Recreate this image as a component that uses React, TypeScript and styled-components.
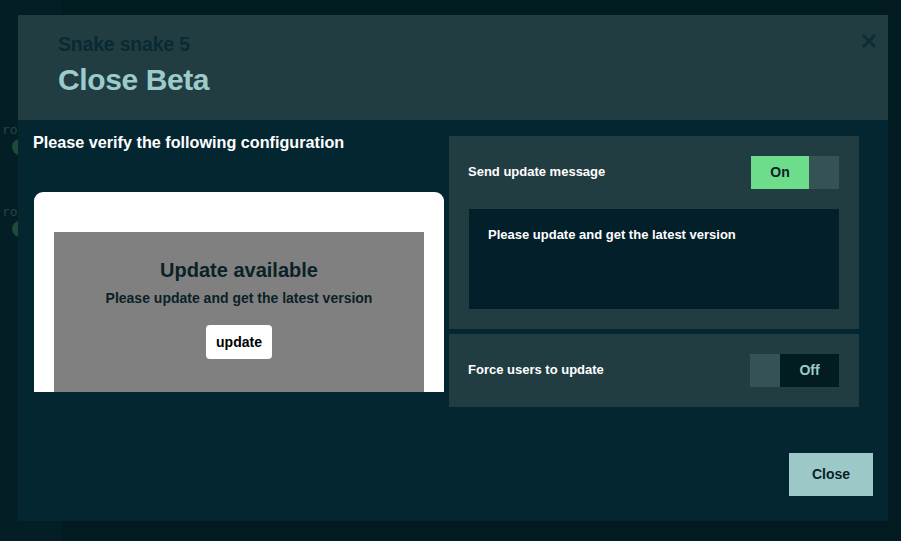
import React from "react";
import styled, { createGlobalStyle } from "styled-components";

const Global = createGlobalStyle`
  html, body { margin: 0; padding: 0; }
  body {
    background: #021a20;
    font-family: "Liberation Sans", Arial, sans-serif;
    width: 901px; height: 541px; overflow: hidden;
  }
`;

const Backdrop = styled.div`
  position: relative;
  width: 901px;
  height: 541px;
  background: #021b21;
  display: flex;
`;

const SideCol = styled.div`
  width: 62px;
  display: flex;
  flex-direction: column;
  padding-top: 122px;
  gap: 46px;
  background: #031e24;
`;

const GhostRow = styled.div`
  height: 36px;
  display: flex;
  flex-direction: column;
  gap: 2px;
  color: #2a4348;
  font-family: "DejaVu Sans Mono", monospace;
  font-size: 13px;
  padding-left: 2px;
`;

const GhostDot = styled.span`
  width: 16px;
  height: 16px;
  border-radius: 50%;
  background: #1d4a3a;
  margin-left: 10px;
`;

const Overlay = styled.div`
  position: absolute;
  inset: 0;
  padding: 15px 13px 20px 18px;
  display: flex;
  align-items: flex-start;
`;

const Modal = styled.div`
  width: 870px;
  height: 506px;
  background: #042631;
  display: flex;
  flex-direction: column;
`;

const Header = styled.div`
  position: relative;
  height: 105px;
  background: #223d42;
  padding: 19px 40px 0 40px;
  box-sizing: border-box;
`;

const Sub = styled.div`
  font-size: 19.5px;
  font-weight: 700;
  color: #0a2a33;
  line-height: 20px;
  letter-spacing: -0.2px;
`;

const Title = styled.h1`
  margin: 9px 0 0;
  font-size: 30px;
  font-weight: 700;
  color: #9ccbcb;
  line-height: 34px;
  letter-spacing: -0.4px;
`;

const CloseX = styled.button`
  position: absolute;
  top: 17px;
  right: 10px;
  width: 18px;
  height: 18px;
  padding: 0;
  border: 0;
  background: transparent;
  display: flex;
  align-items: center;
  justify-content: center;
`;

const Body = styled.div`
  display: grid;
  grid-template-columns: 410px 410px;
  column-gap: 5px;
  padding: 16px 29px 0 16px;
`;

const LeftCol = styled.div`
  display: flex;
  flex-direction: column;
`;

const Heading = styled.div`
  margin-top: -4px;
  font-size: 16.2px;
  font-weight: 700;
  color: #ffffff;
  line-height: 20px;
  margin-left: -1px;
`;

const PreviewCard = styled.div`
  margin-top: 40px;
  height: 200px;
  background: #ffffff;
  border-radius: 9px 9px 0 0;
  padding: 40px 20px 0;
  box-sizing: border-box;
  overflow: hidden;
`;

const Dialog = styled.div`
  height: 200px;
  background: #808080;
  display: flex;
  flex-direction: column;
  align-items: center;
  padding-top: 26px;
  box-sizing: border-box;
  color: #0b2128;
`;

const DialogTitle = styled.div`
  font-size: 20px;
  font-weight: 700;
  line-height: 24px;
`;

const DialogText = styled.div`
  margin-top: 7px;
  font-size: 14px;
  font-weight: 700;
  line-height: 18px;
`;

const DialogButton = styled.button`
  margin-top: 18px;
  width: 66px;
  height: 34px;
  border: 0;
  border-radius: 4px;
  background: #ffffff;
  color: #000;
  font-family: inherit;
  font-size: 14px;
  font-weight: 700;
`;

const RightCol = styled.div`
  display: flex;
  flex-direction: column;
  gap: 5px;
`;

const Panel = styled.div`
  background: #223d42;
  padding: 20px;
  display: flex;
  flex-direction: column;
  gap: 20px;
`;

const Row = styled.div`
  display: flex;
  align-items: center;
  justify-content: space-between;
`;

const Label = styled.div`
  font-size: 13px;
  font-weight: 700;
  color: #ffffff;
  margin-left: -1px;
  margin-top: -2px;
`;

const Toggle = styled.div`
  display: flex;
  height: 33px;
`;

const ToggleSeg = styled.div<{ $tone: "on" | "off" | "knob" }>`
  display: flex;
  align-items: center;
  justify-content: center;
  font-size: 14px;
  font-weight: 700;
  padding-bottom: 2px;
  box-sizing: border-box;
  width: ${(p) => (p.$tone === "knob" ? "30px" : p.$tone === "on" ? "58px" : "59px")};
  background: ${(p) =>
    p.$tone === "on" ? "#6ddc8b" : p.$tone === "off" ? "#031c22" : "#355256"};
  color: ${(p) => (p.$tone === "on" ? "#0b2128" : "#9ccbcb")};
`;

const Message = styled.div`
  height: 100px;
  background: #03202a;
  box-sizing: border-box;
  padding: 18px 19px;
  font-size: 13px;
  font-weight: 700;
  color: #ffffff;
  line-height: 16px;
`;

const Footer = styled.div`
  margin-top: auto;
  display: flex;
  justify-content: flex-end;
  padding: 0 15px 25px;
`;

const CloseButton = styled.button`
  width: 84px;
  height: 43px;
  border: 0;
  background: #9cc8c8;
  color: #0b2128;
  font-family: inherit;
  font-size: 14px;
  font-weight: 700;
  padding-bottom: 2px;
`;

export default function App() {
  return (
    <>
      <Global />
      <Backdrop>
        <SideCol>
          <GhostRow>
            ro
            <GhostDot />
          </GhostRow>
          <GhostRow>
            ro
            <GhostDot />
          </GhostRow>
        </SideCol>
        <Overlay>
          <Modal>
            <Header>
              <Sub>Snake snake 5</Sub>
              <Title>Close Beta</Title>
              <CloseX aria-label="close">
                <svg width="14" height="14" viewBox="0 0 14 14">
                  <path d="M2 2 L12 12 M12 2 L2 12" stroke="#0b2d36" strokeWidth="3" strokeLinecap="square" />
                </svg>
              </CloseX>
            </Header>
            <Body>
              <LeftCol>
                <Heading>Please verify the following configuration</Heading>
                <PreviewCard>
                  <Dialog>
                    <DialogTitle>Update available</DialogTitle>
                    <DialogText>Please update and get the latest version</DialogText>
                    <DialogButton>update</DialogButton>
                  </Dialog>
                </PreviewCard>
              </LeftCol>
              <RightCol>
                <Panel>
                  <Row>
                    <Label>Send update message</Label>
                    <Toggle>
                      <ToggleSeg $tone="on">On</ToggleSeg>
                      <ToggleSeg $tone="knob" />
                    </Toggle>
                  </Row>
                  <Message>Please update and get the latest version</Message>
                </Panel>
                <Panel>
                  <Row>
                    <Label>Force users to update</Label>
                    <Toggle>
                      <ToggleSeg $tone="knob" />
                      <ToggleSeg $tone="off">Off</ToggleSeg>
                    </Toggle>
                  </Row>
                </Panel>
              </RightCol>
            </Body>
            <Footer>
              <CloseButton>Close</CloseButton>
            </Footer>
          </Modal>
        </Overlay>
      </Backdrop>
    </>
  );
}
